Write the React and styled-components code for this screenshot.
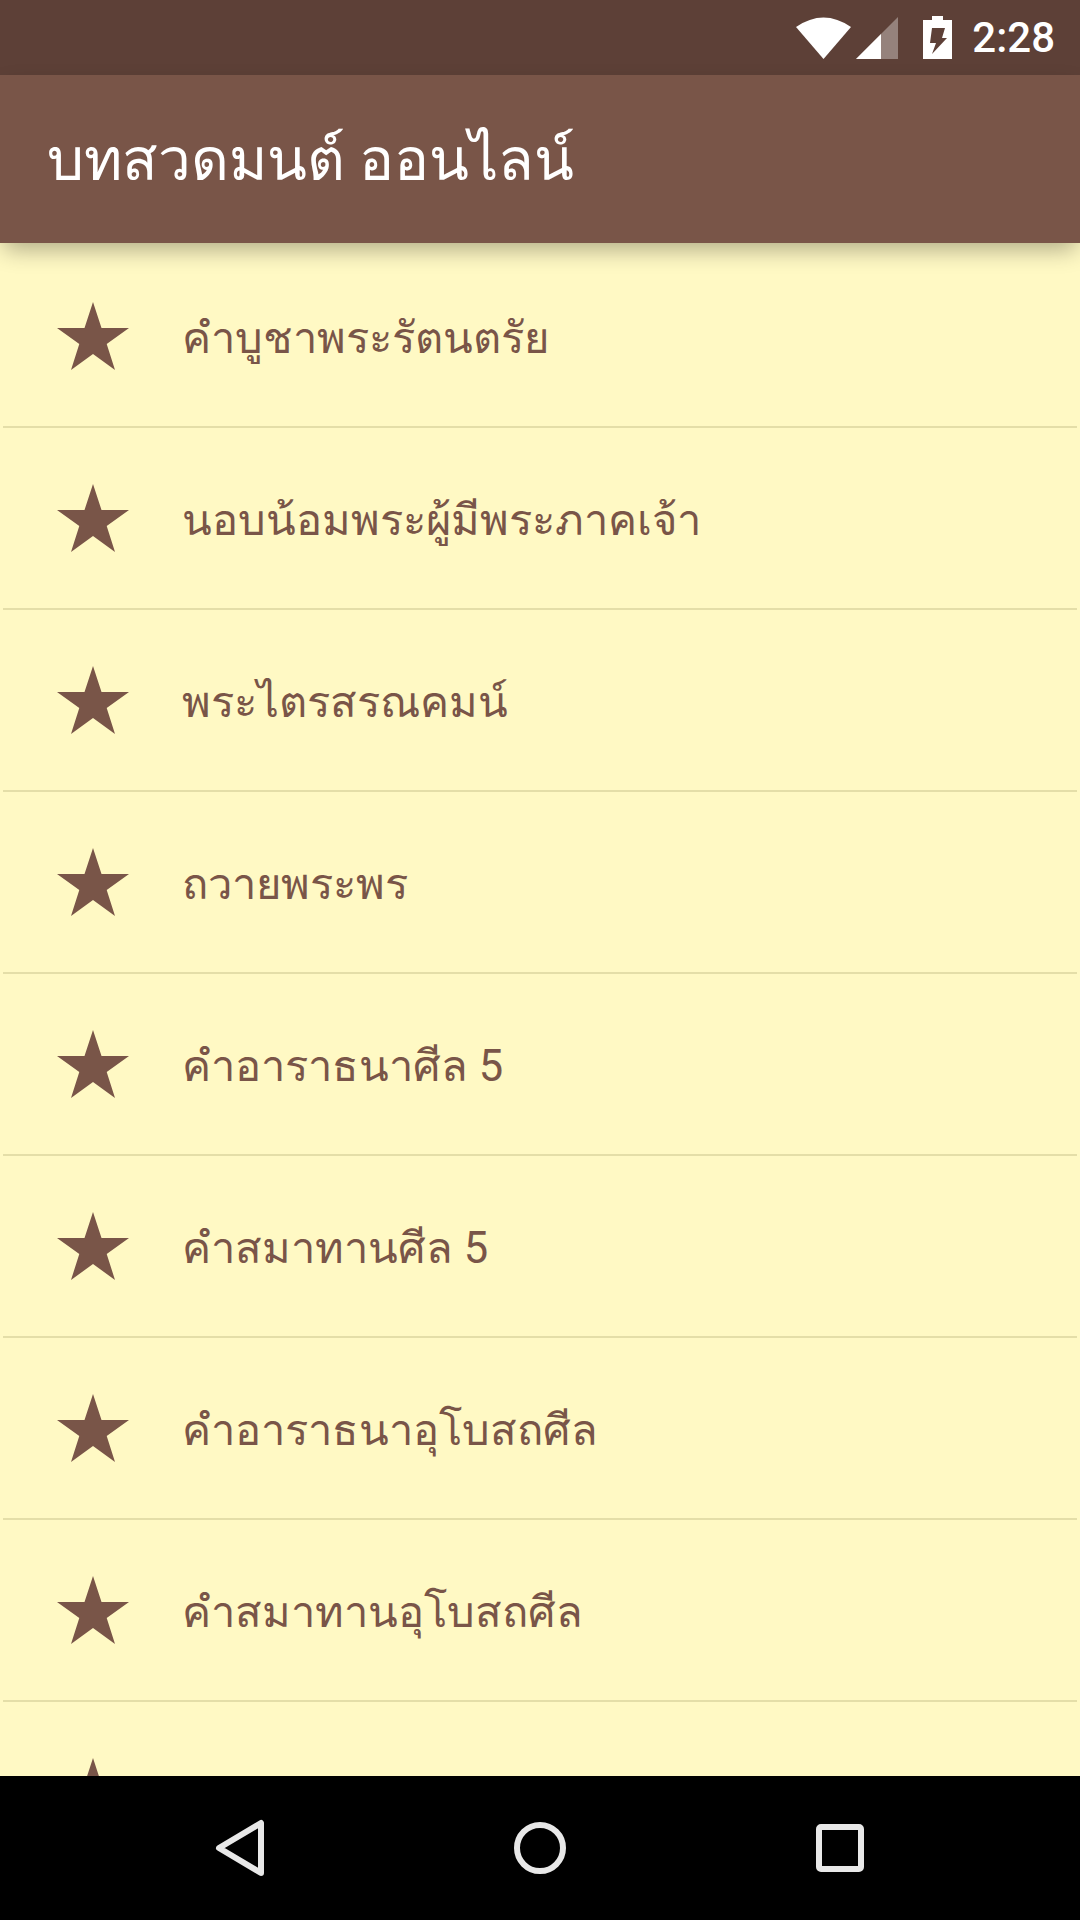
import React from "react";
import styled, { createGlobalStyle } from "styled-components";

const GlobalStyle = createGlobalStyle`
  html, body {
    margin: 0;
    padding: 0;
    background: #000;
  }
  * {
    box-sizing: border-box;
  }
`;

const Screen = styled.div`
  width: 1080px;
  height: 1920px;
  display: flex;
  flex-direction: column;
  overflow: hidden;
  font-family: Roboto, "Noto Sans", "DejaVu Sans", sans-serif;
`;

const StatusBar = styled.div`
  height: 75px;
  flex: none;
  background: #5d4037;
  display: flex;
  align-items: center;
  justify-content: flex-end;
  padding-right: 25px;
`;

const StatusIcon = styled.svg`
  display: block;
  flex: none;
  margin-right: ${(p) => p.$gap}px;
`;

const Clock = styled.span`
  color: #fff;
  font-size: 42px;
  font-weight: 500;
  line-height: 75px;
`;

const AppBar = styled.header`
  height: 168px;
  flex: none;
  background: #795548;
  display: flex;
  align-items: center;
  padding-left: 47px;
  position: relative;
  z-index: 2;
  box-shadow: 0 10px 22px -4px rgba(0, 0, 0, 0.32);
`;

const Title = styled.h1`
  margin: 0;
  color: #fff;
  font-size: 58.4px;
  font-weight: 400;
`;

const List = styled.ul`
  flex: 1;
  min-height: 0;
  margin: 0;
  padding: 2px 0 0;
  list-style: none;
  background: #fff9c4;
  overflow: hidden;
`;

const Row = styled.li`
  height: 182px;
  display: flex;
  align-items: center;
  position: relative;
  color: #795548;

  &::after {
    content: "";
    position: absolute;
    left: 3px;
    right: 3px;
    bottom: -1px;
    height: 2px;
    background: #e4dea8;
  }
`;

const Star = styled.svg`
  display: block;
  flex: none;
  margin: 0 0 0 57px;
`;

const Label = styled.span`
  margin: 2px 0 0 53px;
  font-size: 43.5px;
  white-space: nowrap;
`;

const NavBar = styled.nav`
  height: 144px;
  flex: none;
  background: #000;
  display: grid;
  grid-template-columns: 240px 60px 240px 60px 240px;
  justify-content: center;
  align-items: center;
  justify-items: center;
`;

const NavIcon = styled.svg`
  display: block;
  fill: none;
  stroke: #e8e8e8;
  stroke-width: 6;
  stroke-linejoin: round;
`;

const items = [
  "คำบูชาพระรัตนตรัย",
  "นอบน้อมพระผู้มีพระภาคเจ้า",
  "พระไตรสรณคมน์",
  "ถวายพระพร",
  "คำอาราธนาศีล 5",
  "คำสมาทานศีล 5",
  "คำอาราธนาอุโบสถศีล",
  "คำสมาทานอุโบสถศีล",
  "",
];

function App() {
  return (
    <Screen>
      <GlobalStyle />
      <StatusBar>
        <StatusIcon $gap={5} width="55" height="44" viewBox="0 0 55 44">
          <path d="M27.5 43 L0 11 Q27.5 -8 55 11 Z" fill="#fff" />
        </StatusIcon>
        <StatusIcon $gap={25} width="42" height="42" viewBox="0 0 42 42">
          <path d="M0 42 L42 0 V42 Z" fill="#fff" fillOpacity="0.35" />
          <path d="M0 42 L25 17 V42 Z" fill="#fff" />
        </StatusIcon>
        <StatusIcon $gap={20} width="29" height="43" viewBox="0 0 29 43">
          <path
            fillRule="evenodd"
            d="M9 0 H20 V4 H29 V43 H0 V4 H9 Z M9 12 H22 L19 22 H24 L9 38 L13 27 H7 Z"
            fill="#fff"
          />
        </StatusIcon>
        <Clock>2:28</Clock>
      </StatusBar>
      <AppBar>
        <Title>บทสวดมนต์ ออนไลน์</Title>
      </AppBar>
      <List>
        {items.map((text, i) => (
          <Row key={i}>
            <Star width="72" height="68" viewBox="0 0 72 68">
              <path
                d="M36 0 L44.5 26 H72 L49.7 42 L58 68 L36 52 L14 68 L22.3 42 L0 26 H27.5 Z"
                fill="#795548"
              />
            </Star>
            {text && <Label>{text}</Label>}
          </Row>
        ))}
      </List>
      <NavBar>
        <NavIcon width="52" height="60" viewBox="0 0 52 60">
          <path d="M47 5 V55 L5 30 Z" />
        </NavIcon>
        <span />
        <NavIcon width="52" height="52" viewBox="0 0 52 52">
          <circle cx="26" cy="26" r="23" />
        </NavIcon>
        <span />
        <NavIcon width="48" height="48" viewBox="0 0 48 48">
          <rect x="3" y="3" width="42" height="42" rx="2" />
        </NavIcon>
      </NavBar>
    </Screen>
  );
}

export default App;
